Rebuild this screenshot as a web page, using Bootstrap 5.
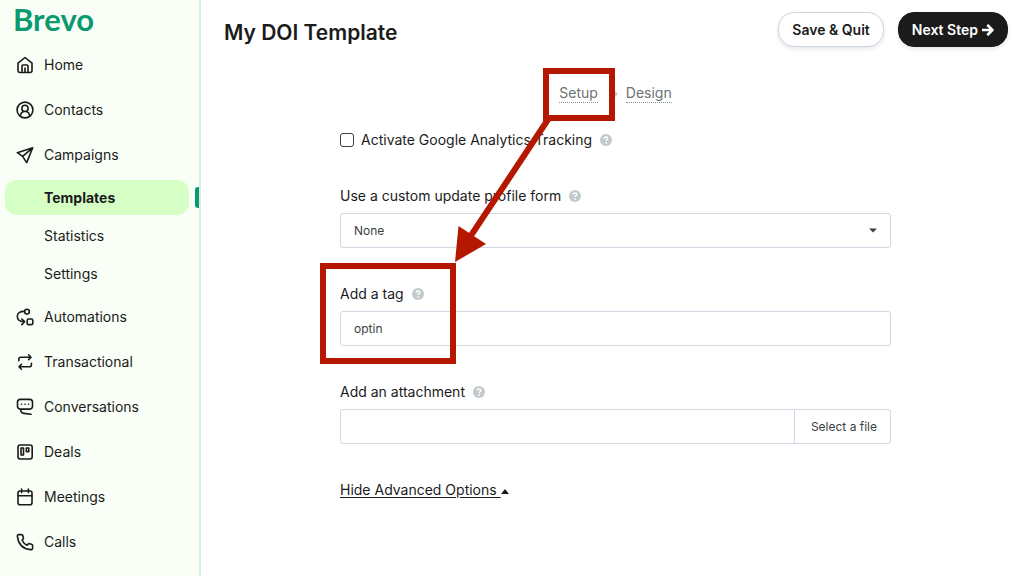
<!DOCTYPE html>
<html lang="en">
<head>
<meta charset="utf-8">
<meta name="viewport" content="width=device-width, initial-scale=1">
<title>My DOI Template - Brevo</title>
<link href="https://cdn.jsdelivr.net/npm/bootstrap@5.3.0/dist/css/bootstrap.min.css" rel="stylesheet">
<style>
  body { font-family: Inter, "Liberation Sans", sans-serif; font-size: 14px; line-height: 20px; color: #1b1b1b; background: #fff; }
  .app-side { width: 201px; background: #f9fff6; border-right: 2px solid #d7eee6; }
  .brand { font-family: Lato, "Liberation Sans", sans-serif; font-size: 31px; font-weight: 700; line-height: 38px; color: #0b996e; padding-left: 13px; height: 42px; }
  .app-side .nav-link { color: #1b1b1b; height: 45px; padding: 0 0 0 16px; gap: 10px; }
  .app-side .nav-link svg { width: 18px; height: 18px; flex: none; }
  .sub-nav { padding: 3px 10px 0 5px; margin-bottom: 1px; }
  .app-side .sub-nav .nav-link { height: 38px; padding-left: 39px; }
  .app-side .sub-nav .nav-link.active { height: 35px; background: #d6ffc6; border-radius: 12px; font-weight: 700; margin-bottom: 2px; }
  .active-mark { right: -10px; top: 7px; width: 4px; height: 21px; background: #0b996e; border-radius: 3px 0 0 3px; }
  svg.line-icon { fill: none; stroke: #1b1b1b; stroke-width: 1.6; stroke-linecap: round; stroke-linejoin: round; }
  .page-head { padding: 12px 16px 0 23px; }
  .page-title { font-size: 21px; line-height: 24px; font-weight: 600; padding-top: 7px; }
  .head-actions { gap: 14px; }
  .btn-pill { height: 35px; padding: 0 13px; border-radius: 16px; font-size: 14px; line-height: 20px; font-weight: 600; box-shadow: 0 2px 4px rgba(40,60,80,.12); }
  .btn-plain { background: #fff; border: 1px solid #ccd6df; color: #1b1b1b; }
  .btn-ink { background: #1b1b1b; border: 1px solid #1b1b1b; color: #fff; }
  .form-area { width: 100%; max-width: 551px; margin: 36px auto 0; left: 3px; }
  .steps { gap: 28px; margin-bottom: 27px; }
  .steps a { color: #6b7272; text-decoration: none; border-bottom: 1px dotted #8b9292; line-height: 19px; }
  .step-sep { left: 274px; top: 8px; }
  .form-check-input.track { width: 14px; height: 14px; margin: 0 7px 0 0; border: 1px solid #3b3f3f; border-radius: 3px; }
  .check-row { margin-bottom: 36px; }
  .field { margin-bottom: 36px; }
  .field-label { margin-bottom: 7px; gap: 8px; }
  .field .form-control, .field .form-select, .file-btn { height: 35px; border: 1px solid #d0d7e2; border-radius: 3px; font-size: 12px; line-height: 20px; color: #3b3f3f; padding: 0 13px; }
  .field .form-select { background-image: url("data:image/svg+xml,%3Csvg xmlns='http://www.w3.org/2000/svg' viewBox='0 0 8 5'%3E%3Cpath d='M0 .5h8L4 4.5z' fill='%233b3f3f'/%3E%3C/svg%3E"); background-size: 8px 5px; background-position: right 13px center; }
  .field .file-btn { background: #fff; padding: 0 13px 0 16px; }
  .help-icon { width: 12px; height: 12px; flex: none; }
  .more-link { color: #1b1b1b; text-underline-offset: 2px; }
  .callout-art { left: -20px; top: -15px; width: 300px; height: 296px; pointer-events: none; }
</style>
</head>
<body>
<svg class="d-none" aria-hidden="true">
  <symbol id="help" viewBox="0 0 12 12"><circle cx="6" cy="6" r="6" fill="#c3cacd"/><path d="M4.2 4.7C4.2 3.6 5 3 6 3s1.800.6 1.800 1.500c0 1.200-1.700 1.200-1.700 2.400" fill="none" stroke="#fff" stroke-width="1.4"/><circle cx="6.1" cy="8.9" r=".9" fill="#fff"/></symbol>
</svg>
<div class="d-flex min-vh-100 overflow-hidden">
  <aside class="app-side flex-shrink-0">
    <div class="brand">Brevo</div>
    <nav class="nav flex-column flex-nowrap">
      <a class="nav-link d-flex align-items-center" href="#"><svg class="line-icon" viewBox="0 0 18 18"><path d="M2 7.2 9 1.5l7 5.7v7.3a2 2 0 0 1-2 2H4a2 2 0 0 1-2-2zM6 16.3V10q0-1 1-1h4q1 0 1 1v6.300M9 12v4.300"/></svg>Home</a>
      <a class="nav-link d-flex align-items-center" href="#"><svg class="line-icon" viewBox="0 0 18 18"><circle cx="9" cy="9" r="7.9"/><circle cx="9" cy="7.4" r="3.1"/><path d="M4.3 14.8c.4-2.4 1.5-3.7 3-4.3M13.7 14.8c-.4-2.4-1.5-3.7-3-4.3"/></svg>Contacts</a>
      <a class="nav-link d-flex align-items-center" href="#"><svg class="line-icon" viewBox="0 0 18 18"><path d="M16.7 1.8 1.3 6.7l5.3 3.7 4.1 6.2zM16.7 1.8 6.6 10.4"/></svg>Campaigns</a>
      <div class="nav flex-column sub-nav">
        <a class="nav-link active position-relative d-flex align-items-center" href="#" aria-current="page">Templates<span class="active-mark position-absolute"></span></a>
        <a class="nav-link d-flex align-items-center" href="#">Statistics</a>
        <a class="nav-link d-flex align-items-center" href="#">Settings</a>
      </div>
      <a class="nav-link d-flex align-items-center" href="#"><svg class="line-icon" viewBox="0 0 18 18"><circle cx="11" cy="3.6" r="2.4"/><rect x="11.2" y="11" width="5.6" height="5.6" rx="1.4"/><path d="M8.4 3.4C4 3.2 1.3 5.2 1.3 8.3c0 3.5 2.2 5.3 6.6 5.4M5.8 11l2.8 2.7L5.8 16.6"/></svg>Automations</a>
      <a class="nav-link d-flex align-items-center" href="#"><svg class="line-icon" viewBox="0 0 18 18"><path d="M2.8 7.8V6.2a2 2 0 0 1 2-2h10M12.6 1.8l2.4 2.4-2.4 2.4M15.4 10.2v1.6a2 2 0 0 1-2 2h-10M5.4 11.4 3 13.8l2.4 2.4"/></svg>Transactional</a>
      <a class="nav-link d-flex align-items-center" href="#"><svg class="line-icon" viewBox="0 0 18 18"><path d="M4.3 1.4h9.4q2.8 0 2.8 2.8v3.9q0 3-2.8 3H4.3q-2.8 0-2.8-3V4.2q0-2.8 2.8-2.8zM4.6 11.3c0 2.900 1.200 3.900 3.400 4.100l7 .9"/><path d="M5.5 6.3h.1M9 6.3h.1M12.5 6.3h.1"/></svg>Conversations</a>
      <a class="nav-link d-flex align-items-center" href="#"><svg class="line-icon" viewBox="0 0 18 18"><rect x="2" y="2" width="14.2" height="14" rx="2.2"/><rect x="5" y="5" width="2.5" height="7"/><rect x="10.3" y="5" width="2.5" height="3.6"/></svg>Deals</a>
      <a class="nav-link d-flex align-items-center" href="#"><svg class="line-icon" viewBox="0 0 18 18"><rect x="2" y="3" width="14" height="13.7" rx="2"/><path d="M2 7.8h14M5.6 1v3.6M12.4 1v3.6"/></svg>Meetings</a>
      <a class="nav-link d-flex align-items-center" href="#"><svg class="line-icon" viewBox="0 0 18 18"><path d="M5.6 1.6H2.7q-1.5 0-1.3 1.7C2.2 10.8 7 15.8 14.7 16.6q1.9.1 1.9-1.5v-2.4q0-1.1-1-1.4l-2.2-.6q-.9-.2-1.500.5l-.8 1C8.5 11 7 9.4 6 7l1-.9q.6-.6.4-1.4l-.5-2q-.3-1.1-1.300-1.100z"/></svg>Calls</a>
    </nav>
  </aside>
  <main class="flex-grow-1">
    <header class="page-head d-flex align-items-center justify-content-between">
      <h1 class="page-title mb-0">My DOI Template</h1>
      <div class="head-actions d-flex">
        <button type="button" class="btn btn-pill btn-plain">Save &amp; Quit</button>
        <button type="button" class="btn btn-pill btn-ink d-flex align-items-center gap-1">Next Step<svg width="12" height="12" viewBox="0 0 12 12" fill="none" stroke="#fff" stroke-width="2.600" stroke-linejoin="round" aria-hidden="true"><path d="M0 6h10M5.300.9 10.400 6 5.300 11.100"/></svg></button>
      </div>
    </header>
    <form class="form-area position-relative">
      <nav class="steps d-flex justify-content-center position-relative" aria-label="Steps">
        <a href="#">Setup</a>
        <svg class="step-sep position-absolute" width="5" height="6" viewBox="0 0 5 6" aria-hidden="true"><path d="M1 0l3 3-3 3z" fill="#c3cacd"/></svg>
        <a href="#">Design</a>
      </nav>
      <div class="check-row d-flex align-items-center">
        <input class="form-check-input track" type="checkbox" id="ga">
        <label for="ga" class="me-2">Activate Google Analytics Tracking</label>
        <svg class="help-icon"><use href="#help"/></svg>
      </div>
      <div class="field">
        <div class="field-label d-flex align-items-center"><label for="profile">Use a custom update profile form</label><svg class="help-icon"><use href="#help"/></svg></div>
        <select class="form-select" id="profile"><option>None</option></select>
      </div>
      <div class="field">
        <div class="field-label d-flex align-items-center"><label for="tag">Add a tag</label><svg class="help-icon"><use href="#help"/></svg></div>
        <input class="form-control" id="tag" type="text" value="optin">
      </div>
      <div class="field mb-0 pb-1">
        <div class="field-label d-flex align-items-center"><label for="attachment">Add an attachment</label><svg class="help-icon"><use href="#help"/></svg></div>
        <div class="input-group flex-nowrap">
          <input class="form-control" id="attachment" type="text" readonly>
          <button class="btn file-btn" type="button">Select a file</button>
        </div>
      </div>
      <div class="pt-4 mt-2"><a class="more-link" href="#">Hide Advanced Options <svg width="8" height="5" viewBox="0 0 8 5" aria-hidden="true"><path d="M0 5h8L4 0z" fill="#1b1b1b"/></svg></a></div>
      <!-- Red callouts: Setup step pointing to the tag field -->
      <svg class="callout-art position-absolute" viewBox="0 0 300 296" aria-hidden="true">
        <g fill="none" stroke="#b51700" stroke-width="6">
          <rect x="226" y="3" width="66" height="47"/>
          <rect x="3" y="198" width="130" height="95"/>
          <path d="M229 50 148 172"/>
        </g>
        <path d="M135 194 138.500 158 166 176z" fill="#b51700"/>
      </svg>
    </form>
  </main>
</div>
<script src="https://cdn.jsdelivr.net/npm/bootstrap@5.3.0/dist/js/bootstrap.bundle.min.js"></script>
</body>
</html>
